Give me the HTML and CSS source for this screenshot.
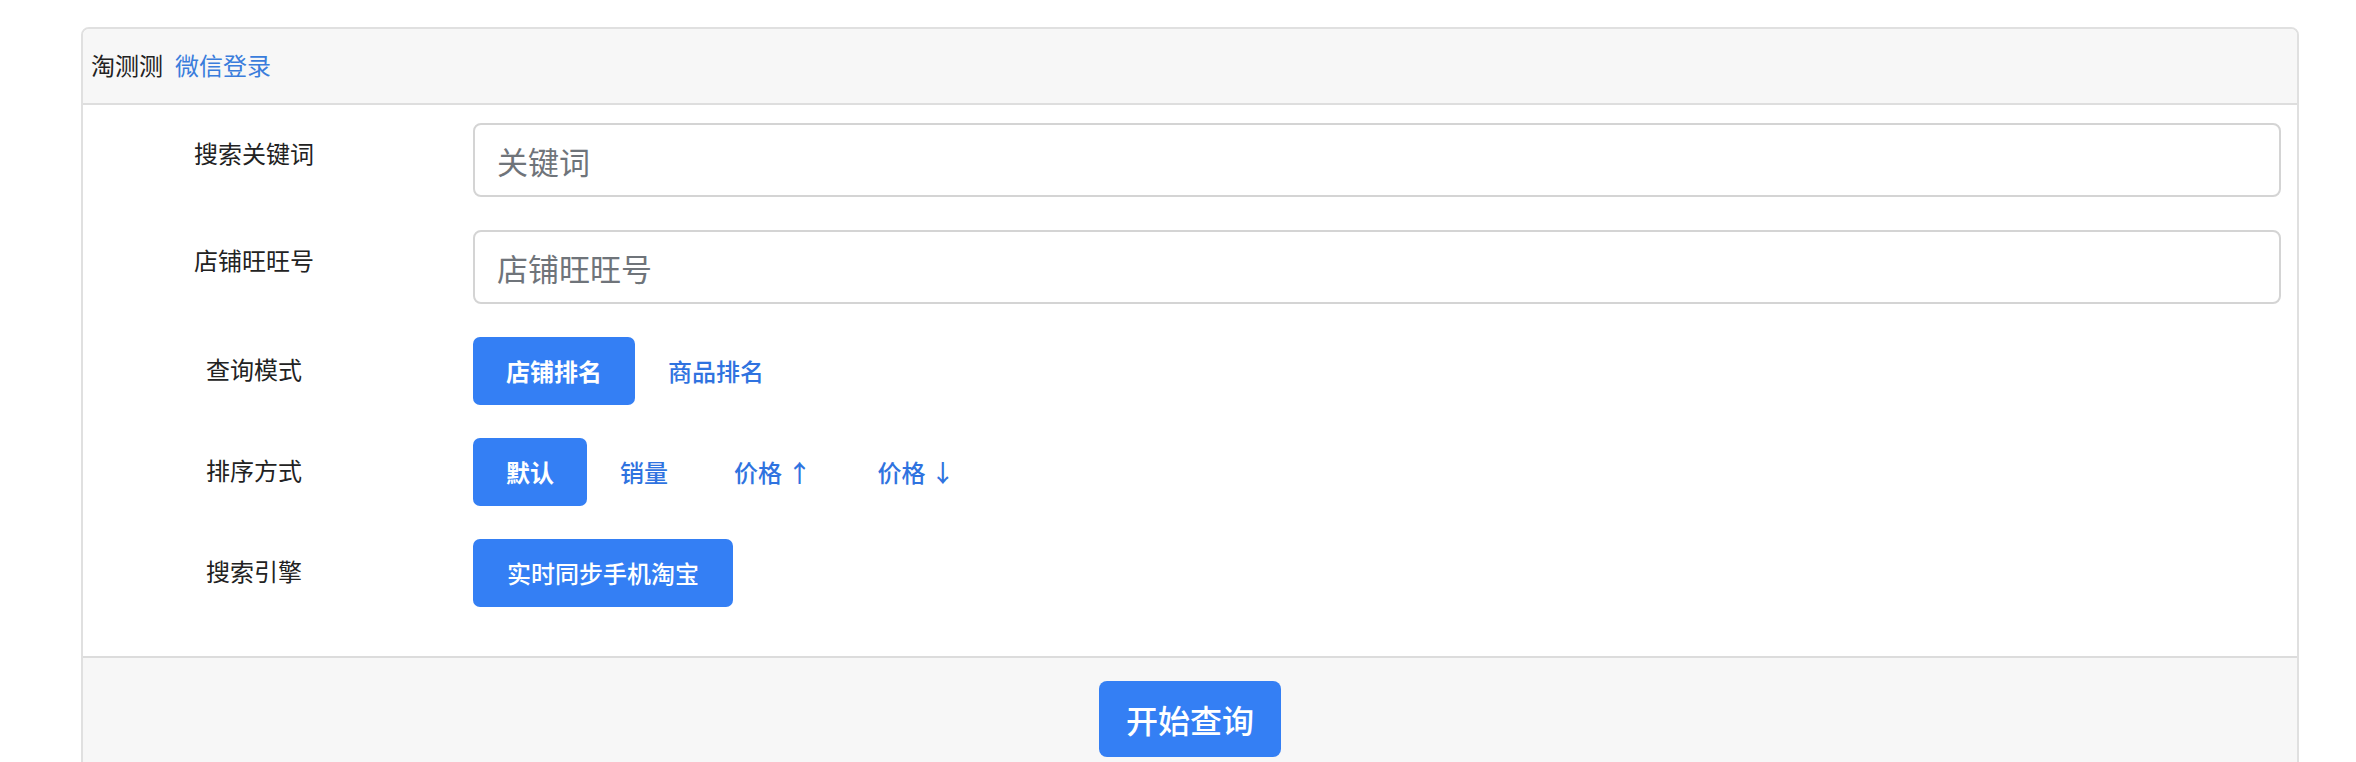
FILE: index.html
```html
<!DOCTYPE html>
<html lang="zh-CN">
<head>
<meta charset="utf-8">
<title>淘测测</title>
<link rel="stylesheet" href="styles.css">
</head>
<body>
<div class="card">
  <div class="card-header">
    <span class="brand">淘测测</span>
    <a class="login" href="#">微信登录</a>
  </div>
  <div class="card-body">
    <div class="row">
      <label class="row-label">搜索关键词</label>
      <input class="field" type="text" placeholder="关键词">
    </div>
    <div class="row">
      <label class="row-label">店铺旺旺号</label>
      <input class="field" type="text" placeholder="店铺旺旺号">
    </div>
    <div class="row row-btns">
      <label class="row-label">查询模式</label>
      <div class="btn-group">
        <button class="btn btn-active">店铺排名</button>
        <button class="btn btn-link">商品排名</button>
      </div>
    </div>
    <div class="row row-btns">
      <label class="row-label">排序方式</label>
      <div class="btn-group">
        <button class="btn btn-active">默认</button>
        <button class="btn btn-link">销量</button>
        <button class="btn btn-link">价格 ↑</button>
        <button class="btn btn-link">价格 ↓</button>
      </div>
    </div>
    <div class="row row-btns">
      <label class="row-label">搜索引擎</label>
      <div class="btn-group">
        <button class="btn btn-active btn-engine">实时同步手机淘宝</button>
      </div>
    </div>
  </div>
  <div class="card-footer">
    <button class="btn-submit">开始查询</button>
  </div>
</div>
</body>
</html>
```

FILE: styles.css
```css
* { box-sizing: border-box; }

html, body {
  margin: 0;
  padding: 0;
  background: #ffffff;
}

body {
  font-family: "Noto Sans CJK SC", "Noto Sans", sans-serif;
  color: #212529;
  padding: 27px 57px 0 81px;
}

.card {
  border: 2px solid #e0e0e0;
  border-radius: 8px;
  background: #fff;
  overflow: hidden;
}

.card-header {
  height: 76px;
  background: #f7f7f7;
  border-bottom: 2px solid #dedede;
  display: flex;
  align-items: center;
  padding: 0 8px 2px 8px;
  font-size: 24px;
  line-height: 36px;
}

.brand { color: #222; }

.login {
  color: #3a7ddc;
  text-decoration: none;
  margin-left: 12px;
}

.card-body {
  padding: 18px 16px 49px 0;
  display: flex;
  flex-direction: column;
  gap: 33px;
}

.row {
  display: grid;
  grid-template-columns: 342px 1fr;
  column-gap: 48px;
  align-items: start;
}

.row-label {
  text-align: center;
  font-size: 24px;
  line-height: 36px;
  padding-top: 12px;
  color: #222;
}

.row-btns .row-label { padding-top: 14px; }

.field {
  height: 74px;
  width: 100%;
  border: 2px solid #d4d4d4;
  border-radius: 8px;
  padding: 0 22px;
  font-family: "Noto Sans CJK SC", "Noto Sans", sans-serif;
  font-size: 31px;
  color: #495057;
  background: #fff;
  outline: none;
}

.field::placeholder { color: #6f747a; }

.btn-group {
  display: flex;
  align-items: center;
}

.btn {
  height: 68px;
  padding: 0 33px;
  border: none;
  border-radius: 7px;
  font-family: "Noto Sans CJK SC", "Noto Sans", sans-serif;
  font-size: 24px;
  font-weight: 500;
  line-height: 68px;
  background: transparent;
  cursor: pointer;
  white-space: nowrap;
}

.btn-active {
  background: #347ff4;
  color: #ffffff;
  font-weight: 600;
}

.btn-engine {
  padding: 0 34px;
  font-weight: 500;
}

.btn-link {
  color: #2f73e0;
}

.card-footer {
  background: #f7f7f7;
  border-top: 2px solid #dcdcdc;
  padding: 23px 0 30px;
  display: flex;
  justify-content: center;
}

.btn-submit {
  height: 76px;
  padding: 0 27px;
  border: none;
  border-radius: 8px;
  background: #347ff4;
  color: #fff;
  font-family: "Noto Sans CJK SC", "Noto Sans", sans-serif;
  font-size: 32px;
  font-weight: 500;
  line-height: 76px;
  cursor: pointer;
}
```
